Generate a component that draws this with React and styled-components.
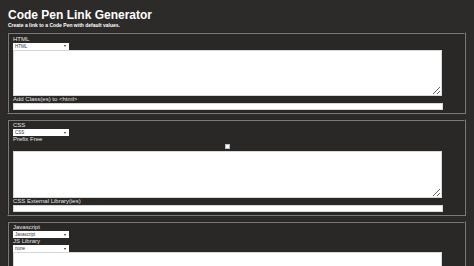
import styled, { createGlobalStyle } from 'styled-components';

const GlobalStyle = createGlobalStyle`
	html, body {
		margin: 0;
		padding: 0;
		background: #2d2b29;
		color: #e4e4e4;
		font-family: "Liberation Sans", Arial, sans-serif;
		overflow: hidden;
	}
`;

const Page = styled.div`
	padding: 0 8px 0 7px;
`;

const Title = styled.h1`
	margin: 8px 0 0 1px;
	font-size: 12px;
	line-height: 14px;
	font-weight: bold;
	color: #ffffff;
`;

const Subtitle = styled.p`
	margin: 0 0 4px 1px;
	font-size: 5px;
	line-height: 6px;
	font-weight: bold;
	color: #ffffff;
`;

const Section = styled.fieldset`
	margin: 0 0 5px 0;
	padding: 1.5px 4px 1.5px 4px;
	border: 2px groove #7a7a7a;
	background: #292826;
	min-width: 0;
`;

const Label = styled.label`
	display: block;
	font-size: 6px;
	line-height: 7px;
	color: #e4e4e4;
`;

const SelectWrap = styled.div`
	position: relative;
	width: 56px;
	height: 7px;
`;

const Select = styled.select`
	appearance: none;
	display: block;
	width: 56px;
	height: 7px;
	margin: 0;
	padding: 0 0 0 2px;
	border: none;
	border-radius: 0;
	background: #ffffff;
	color: #333;
	font-family: "Liberation Sans", Arial, sans-serif;
	font-size: 4.5px;
	line-height: 7px;
	outline: none;
`;

const Arrow = styled.span`
	position: absolute;
	right: 3px;
	top: 2.5px;
	width: 0;
	height: 0;
	border-left: 1.8px solid transparent;
	border-right: 1.8px solid transparent;
	border-top: 2.2px solid #333;
	pointer-events: none;
`;

const TextArea = styled.textarea`
	display: block;
	box-sizing: border-box;
	width: 96%;
	height: ${(p) => p.$h}px;
	margin: 0;
	padding: 1px;
	border: 1px solid #d8d8d8;
	background: #ffffff;
	font-size: 6px;
	outline: none;
`;

const TextInput = styled.input`
	display: block;
	box-sizing: border-box;
	width: 96.2%;
	height: 7.5px;
	margin: 0;
	padding: 0 1px;
	border: 1px solid #d8d8d8;
	background: #ffffff;
	font-size: 5px;
	outline: none;
`;

const CheckRow = styled.div`
	width: 96%;
	height: 7.5px;
	display: flex;
	justify-content: center;
	align-items: center;
`;

const Check = styled.input`
	appearance: none;
	width: 5px;
	height: 5px;
	margin: 0;
	background: #ffffff;
	border: 0.5px solid #bbb;
	border-radius: 0;
`;

const Dropdown = ({ options }) => (
	<SelectWrap>
		<Select defaultValue={options[0]}>
			{options.map((o) => (
				<option key={o}>{o}</option>
			))}
		</Select>
		<Arrow />
	</SelectWrap>
);

const App = () => {
	return (
		<>
			<GlobalStyle />
			<Page>
				<Title>Code Pen Link Generator</Title>
				<Subtitle>Create a link to a Code Pen with default values.</Subtitle>

				<Section>
					<Label>HTML</Label>
					<Dropdown options={['HTML', 'Haml', 'Markdown', 'Slim', 'Pug']} />
					<TextArea $h={46} />
					<Label>Add Class(es) to &lt;html&gt;</Label>
					<TextInput type='text' />
				</Section>

				<Section>
					<Label>CSS</Label>
					<Dropdown options={['CSS', 'SCSS', 'Sass', 'LESS', 'Stylus']} />
					<Label>Prefix Free</Label>
					<CheckRow>
						<Check type='checkbox' />
					</CheckRow>
					<TextArea $h={47} />
					<Label>CSS External Library(ies)</Label>
					<TextInput type='text' />
				</Section>

				<Section>
					<Label>Javascript</Label>
					<Dropdown options={['Javascript', 'CoffeeScript', 'LiveScript', 'TypeScript']} />
					<Label>JS Library</Label>
					<Dropdown options={['none', 'jQuery', 'MooTools', 'Prototype']} />
					<TextArea $h={47} />
					<Label>JS External Library(ies)</Label>
					<TextInput type='text' />
				</Section>
			</Page>
		</>
	);
};

export default App;
